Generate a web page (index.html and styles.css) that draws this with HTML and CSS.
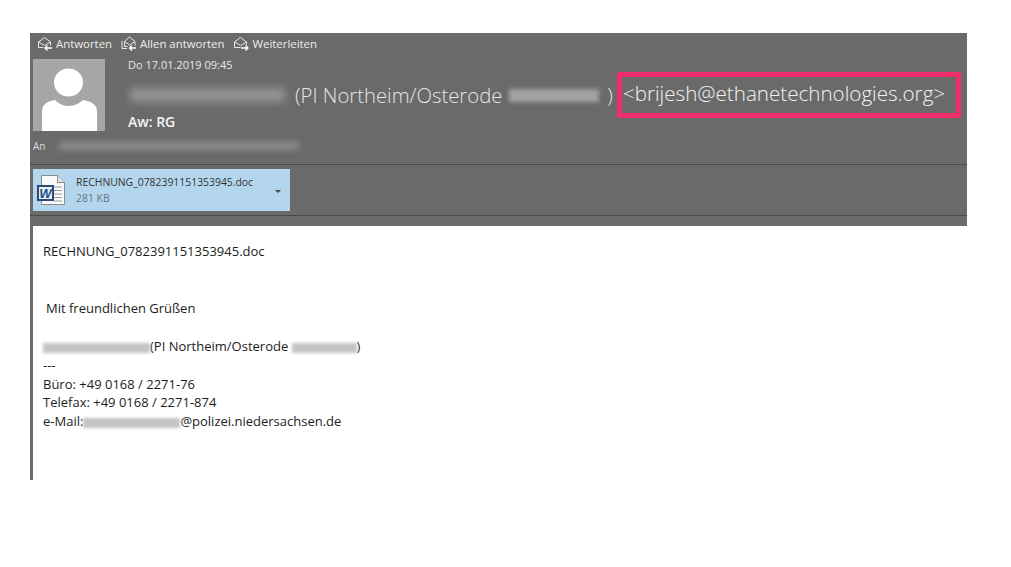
FILE: index.html
```html
<!DOCTYPE html>
<html lang="de">
<head>
  <meta charset="UTF-8">
  <title>Aw: RG</title>
  <link rel="stylesheet" href="styles.css">
</head>
<body>

  <div class="mail">
    <header class="head">

      <!-- Antworten usw. -->
      <div class="actions">
        <span class="action">
          <svg class="action-icon" viewBox="0 0 16 15"><path d="M1.500 6 7.500 1.500 13.500 6v3.500M1.500 6v5.500h5M1.500 6l6 3.500 6-3.500"/><path class="arrow" d="M15 12H8M10.500 9.500 8 12l2.500 2.500"/></svg>
          Antworten
        </span>
        <span class="action">
          <svg class="action-icon" viewBox="0 0 16 15"><path d="M1 5v7.500h5M3.500 5.500 8.500 1l5.500 4.500v4M3.500 5.500v5h3M3.500 5.500l5 3.500 5.500-3.500"/><path class="arrow" d="M15 12H8.500M11 9.500 8.500 12l2.500 2.500"/></svg>
          Allen antworten
        </span>
        <span class="action">
          <svg class="action-icon" viewBox="0 0 16 15"><path d="M1.500 6 7.500 1.500 13.500 6v3M1.500 6v5.500h6M1.500 6l6 3.500 6-3.500"/><path class="arrow" d="M8 12h7M12.500 9.500 15 12l-2.500 2.500"/></svg>
          Weiterleiten
        </span>
      </div>

      <div class="sender">
        <div class="avatar">
          <svg viewBox="0 0 72 72"><ellipse cx="35.500" cy="23.500" rx="14.500" ry="14"/><path d="M9 72V52c0-7 6-10 13-11 8 8 19 8 28 0 7 1 14 4 14 11v20z"/></svg>
        </div>
        <div class="sender-info">
          <div class="date">Do 17.01.2019 09:45</div>
          <div class="from">
            <span class="blob blob-name"></span>
            <span class="from-name">(PI Northeim/Osterode</span>
            <span class="blob blob-dept"></span>
            <span class="from-close">)</span>
            <span class="from-mail">&lt;brijesh@ethanetechnologies.org&gt;</span>
          </div>
          <div class="subject">Aw: RG</div>
        </div>
      </div>

      <div class="to">
        <span>An</span>
        <span class="blob blob-to"></span>
      </div>

      <div class="attach-row">
        <div class="attachment">
          <svg class="doc-icon" viewBox="0 0 30 30">
            <path class="doc-page" d="M4.500 .5h16l7 7v22h-23z"/>
            <path class="doc-fold" d="M20.500 .5v7h7"/>
            <path class="doc-lines" d="M17 12h8M17 15.500h8M17 19h8M17 22.500h8M17 26h8"/>
            <rect class="doc-badge" x="1" y="11" width="15" height="14"/>
            <text class="doc-w" x="8.500" y="22.500">W</text>
          </svg>
          <div class="file">
            <div class="file-name">RECHNUNG_0782391151353945.doc</div>
            <div class="file-size">281 KB</div>
          </div>
          <span class="caret"></span>
        </div>
      </div>
    </header>

    <main class="content">
      <p class="line">RECHNUNG_0782391151353945.doc</p>
      <p class="line greet">Mit freundlichen Grüßen</p>
      <div class="signature">
        <div class="line"><span class="blob blob-sig1"></span>(PI Northeim/Osterode <span class="blob blob-sig2"></span>)</div>
        <div class="line">---</div>
        <div class="line">Büro: +49 0168 / 2271-76</div>
        <div class="line">Telefax: +49 0168 / 2271-874</div>
        <div class="line">e-Mail:<span class="blob blob-sig3"></span>@polizei.niedersachsen.de</div>
      </div>
    </main>
  </div>

</body>
</html>
```
FILE: styles.css
```css
body {
  margin: 0;
  background-color: #fff;
  font-family: "Open Sans", "Noto Sans", sans-serif;
}
.mail {
  width: 937px;
  margin: 33px 0 0 30px;
}
.head {
  background-color: #6a6a6a;
  color: #f2f2f2;
  height: 193px;
  overflow: hidden;
}
.actions {
  display: flex;
  gap: 9px;
  height: 23px;
  box-sizing: border-box;
  padding: 0 0 3px 7px;
  align-items: center;
  font-size: 11.400px;
}
.action {
  display: flex;
  align-items: center;
  gap: 3px;
  color: #ececec;
}
.action-icon {
  width: 16px;
  height: 15px;
  fill: none;
  stroke: #e8e8e8;
  stroke-width: 1;
}
.action-icon .arrow {
  stroke: #fff;
  stroke-width: 1.300;
}
.sender {
  display: flex;
  padding-left: 3px;
  height: 76px;
  margin-top: 3px;
}
.avatar {
  width: 72px;
  height: 72px;
  background-color: #a6a6a6;
  flex: none;
}
.avatar svg {
  display: block;
  fill: #fff;
}
.sender-info {
  margin-left: 23px;
  min-width: 0;
}
.date {
  font-size: 11px;
  line-height: 12px;
  color: #e8e8e8;
}
.from {
  display: flex;
  align-items: center;
  height: 30px;
  margin-top: 9px;
  margin-left: 2px;
  font-size: 20.300px;
  font-weight: 300;
  color: #e4e4e4;
  white-space: nowrap;
}
.from-name {
  margin-left: 10px;
}
.from-close {
  margin-left: 8px;
}
.from-mail {
  flex: none;
  box-sizing: border-box;
  width: 344px;
  height: 46px;
  margin-left: 4px;
  padding-left: 1px;
  border: 5px solid #f02e6c;
  line-height: 33px;
  font-size: 20.600px;
  color: #f4f4f4;
}
.subject {
  font-size: 14px;
  font-weight: 600;
  line-height: 18px;
  margin-top: 3px;
  color: #f4f4f4;
}
.blob {
  display: inline-block;
  background-color: #949494;
  filter: blur(4px);
}
.blob-name {
  flex: none;
  width: 155px;
  height: 14px;
}
.blob-dept {
  flex: none;
  width: 90px;
  height: 13px;
  margin-left: 7px;
  background-color: #a2a2a2;
  filter: blur(2px);
}
.to {
  display: flex;
  align-items: center;
  height: 16px;
  margin-top: 3px;
  font-size: 10px;
  padding-left: 3px;
  color: #dcdcdc;
}
.blob-to {
  width: 240px;
  height: 8px;
  margin-left: 14px;
  background-color: #8c8c8c;
  filter: blur(3px);
}
.attach-row {
  margin-top: 10px;
  height: 52px;
  box-sizing: border-box;
  border-top: 1px solid #4a4a4a;
  border-bottom: 1px solid #4a4a4a;
  padding: 4px 0 0 3px;
}
.attachment {
  display: flex;
  align-items: center;
  width: 257px;
  height: 42px;
  background-color: #b3d5ed;
  color: #333;
}
.doc-icon {
  width: 30px;
  height: 30px;
  margin-left: 4px;
  flex: none;
}
.doc-page {
  fill: #fafafa;
  stroke: #8a8a8a;
}
.doc-fold {
  fill: #e4e4e4;
  stroke: #8a8a8a;
}
.doc-lines {
  stroke: #9a9a9a;
}
.doc-badge {
  fill: #e8f0f6;
  stroke: #2b4a78;
  stroke-width: 2;
}
.doc-w {
  fill: #244f8c;
  font-size: 13px;
  font-weight: 700;
  font-style: italic;
  text-anchor: middle;
  font-family: "Liberation Sans", sans-serif;
}
.file {
  margin-left: 9px;
  font-size: 10.400px;
  line-height: 16px;
  white-space: nowrap;
}
.file-size {
  color: #6a7680;
}
.caret {
  margin-left: 22px;
  margin-top: 3px;
  border-left: 3px solid transparent;
  border-right: 3px solid transparent;
  border-top: 3px solid #444;
}
.content {
  height: 254px;
  box-sizing: border-box;
  border-left: 3px solid #6a6a6a;
  padding: 16px 0 0 10px;
  font-size: 13px;
  color: #1c1c1c;
}
.line {
  margin: 0;
  line-height: 19px;
  white-space: nowrap;
}
.greet {
  margin-top: 38px;
  padding-left: 3px;
}
.signature {
  margin-top: 19px;
}
.signature .line {
  line-height: 18.800px;
}
.signature .blob {
  background-color: #c4c4c4;
  filter: blur(1.500px);
  vertical-align: middle;
}
.blob-sig1 {
  width: 107px;
  height: 10px;
}
.blob-sig2 {
  width: 65px;
  height: 10px;
}
.blob-sig3 {
  width: 97px;
  height: 10px;
}
```
